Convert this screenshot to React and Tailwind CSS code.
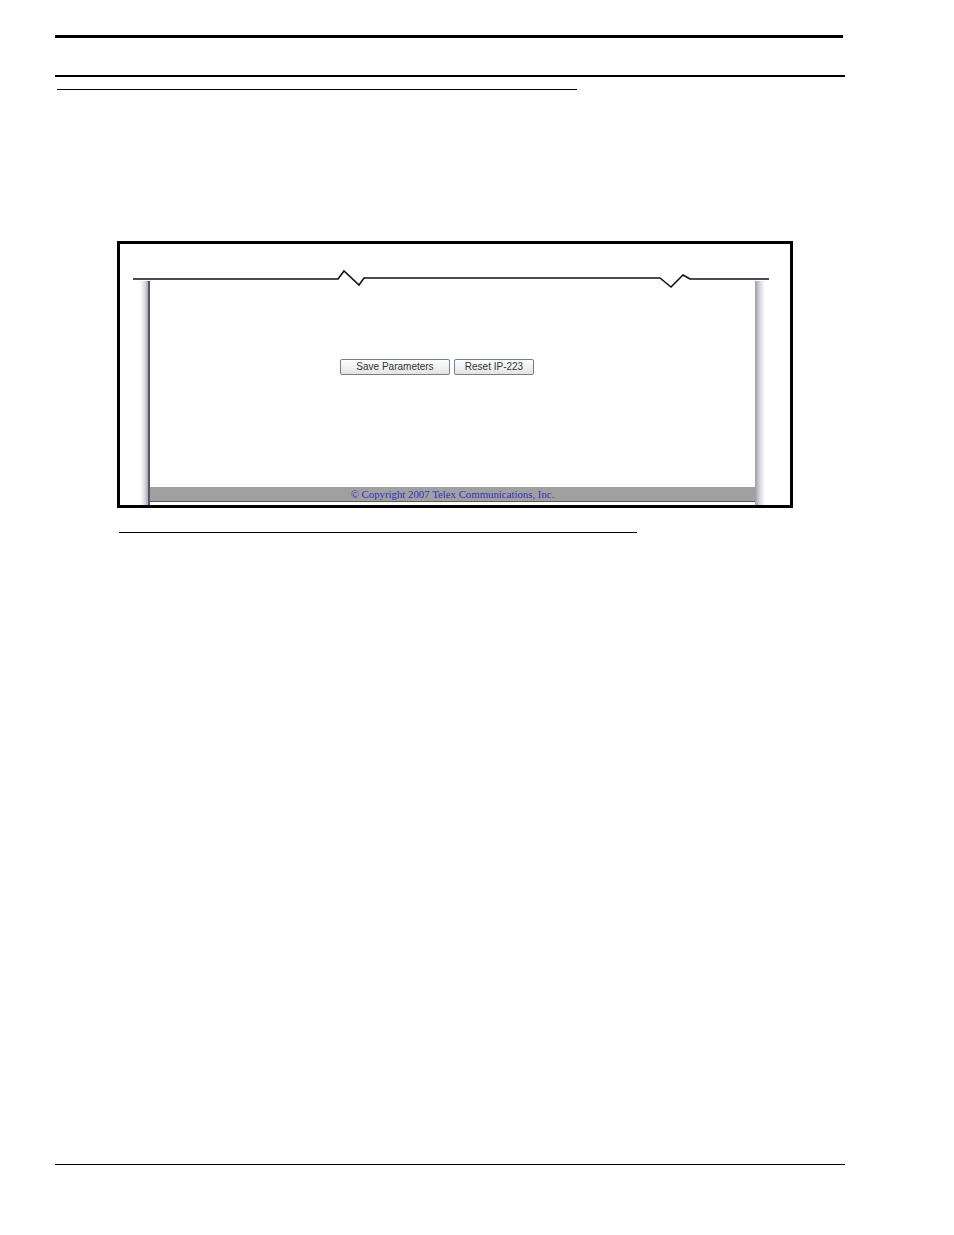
export default function App() {
  return (
    <div className="w-[954px] h-[1235px] bg-white flex flex-col font-['Liberation_Sans',Arial,sans-serif]">
      {/* page header rules */}
      <div className="mt-[35px] ml-[55px] w-[788px] h-[3px] bg-black" />
      <div className="mt-[37px] ml-[55px] w-[790px] h-[2px] bg-black" />
      <div className="mt-[12px] ml-[57px] w-[520px] h-px bg-black" />

      {/* figure frame */}
      <div className="mt-[151px] ml-[117px] w-[676px] h-[267px] border-[3px] border-black flex flex-col">
        <svg width="670" height="37" viewBox="0 0 670 37" className="block shrink-0 overflow-visible">
          <polyline
            points="13,35 218,35 224,27 239,41 244,34 540,34 551,43 563,31 570,35 649,35"
            fill="none"
            stroke="#111"
            strokeWidth="1.6"
          />
        </svg>
        <div className="flex flex-1">
          <div className="w-[30px] flex justify-end">
            <div className="w-[10px] bg-gradient-to-r from-white via-[#e4e4ea] to-[#a9a9b4] border-r-2 border-[#55556a]" />
          </div>
          <div className="flex-1 flex flex-col">
            <div className="flex-1 pt-[78px] pl-[190px] flex gap-[4px] items-start">
              <button className="w-[110px] h-[16px] rounded-[2px] border border-[#6f7f96] bg-gradient-to-b from-white to-[#e3e3e3] text-[10px] leading-[14px] text-[#333]">
                Save Parameters
              </button>
              <button className="w-[80px] h-[16px] rounded-[2px] border border-[#6f7f96] bg-gradient-to-b from-white to-[#e3e3e3] text-[10px] leading-[14px] text-[#333]">
                Reset IP-223
              </button>
            </div>
            <div className="h-[15px] bg-[#a0a0a0] border-b border-[#555] flex items-center justify-center">
              <span className="font-['Liberation_Serif','Times_New_Roman',serif] text-[10.8px] leading-none text-[#3030c4]">
                © Copyright 2007 Telex Communications, Inc.
              </span>
            </div>
            <div className="h-[3px]" />
          </div>
          <div className="w-[35px] flex">
            <div className="w-[10px] bg-gradient-to-r from-[#9d9daa] via-[#d9d9e0] to-white" />
          </div>
        </div>
      </div>

      {/* caption rule */}
      <div className="mt-[24px] ml-[119px] w-[518px] h-px bg-black" />

      {/* footer rule */}
      <div className="mt-[631px] ml-[55px] w-[790px] h-px bg-black" />
    </div>
  );
}
